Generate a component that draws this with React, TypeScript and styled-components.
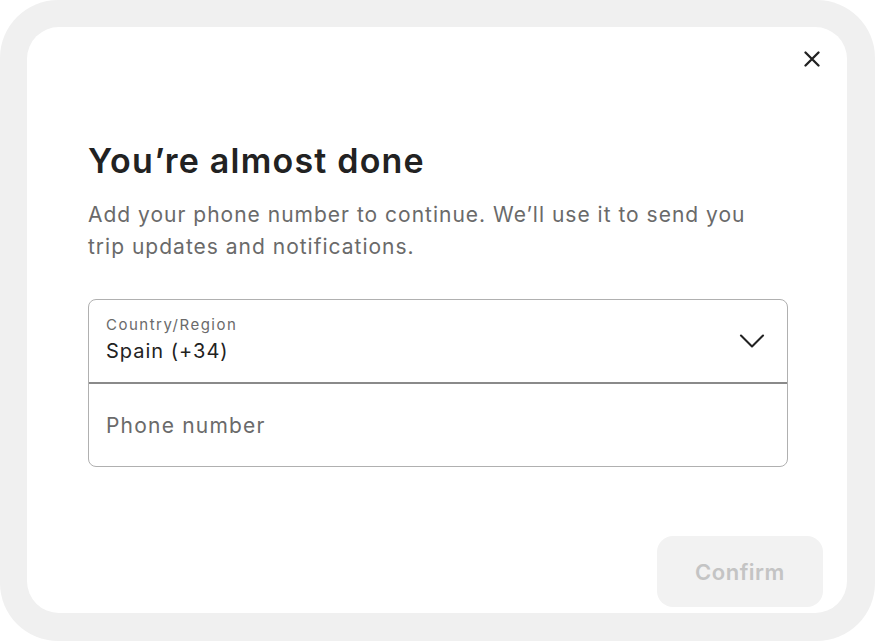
import styled, { createGlobalStyle } from "styled-components";

const GlobalStyle = createGlobalStyle`
  html, body {
    margin: 0;
    padding: 0;
    background: #ffffff;
  }
  body {
    font-family: Inter, "Noto Sans", "Liberation Sans", sans-serif;
    color: #222222;
  }
`;

const App = () => {
  return (
    <>
      <GlobalStyle />
      <Frame>
        <Card>
          <TopBar>
            <CloseButton aria-label="Close">
              <svg width="16" height="16" viewBox="0 0 16 16" fill="none">
                <path d="M1.5 1.5L14.5 14.5M14.5 1.5L1.5 14.5" stroke="#222" strokeWidth="2.3" strokeLinecap="round" />
              </svg>
            </CloseButton>
          </TopBar>

          <Content>
            <Title>You’re almost done</Title>
            <Subtitle>
              Add your phone number to continue. We’ll use it to send you trip updates and notifications.
            </Subtitle>

            <FieldGroup>
              <SelectCell>
                <SelectText>
                  <Label>Country/Region</Label>
                  <Value>Spain (+34)</Value>
                </SelectText>
                <svg width="26" height="16" viewBox="0 0 26 16" fill="none">
                  <path d="M2 2.5L13 13.5L24 2.5" stroke="#222" strokeWidth="2.1" strokeLinecap="round" strokeLinejoin="round" />
                </svg>
              </SelectCell>
              <InputCell>
                <PhoneInput placeholder="Phone number" />
              </InputCell>
            </FieldGroup>
          </Content>

          <Footer>
            <ConfirmButton disabled>Confirm</ConfirmButton>
          </Footer>
        </Card>
      </Frame>
    </>
  );
};

export default App;

const Frame = styled.div`
  box-sizing: border-box;
  width: 875px;
  height: 641px;
  padding: 27px 28px 28px 27px;
  background: #f0f0f0;
  border-radius: 58px;
  display: flex;
`;

const Card = styled.div`
  flex: 1;
  background: #ffffff;
  border-radius: 32px;
  display: flex;
  flex-direction: column;
`;

const TopBar = styled.div`
  display: flex;
  justify-content: flex-end;
  padding: 16px 19px 0 0;
`;

const CloseButton = styled.button`
  width: 32px;
  height: 32px;
  padding: 0;
  border: none;
  background: transparent;
  display: flex;
  align-items: center;
  justify-content: center;
  cursor: pointer;
`;

const Content = styled.div`
  padding: 66px 59px 0 61px;
  display: flex;
  flex-direction: column;
`;

const Title = styled.h1`
  margin: 0;
  font-size: 34px;
  line-height: 40px;
  font-weight: 600;
  letter-spacing: 1.2px;
  color: #222222;
`;

const Subtitle = styled.p`
  margin: 18px 0 0;
  font-size: 21px;
  line-height: 32px;
  font-weight: 400;
  letter-spacing: 1px;
  color: #6a6a6a;
`;

const FieldGroup = styled.div`
  margin-top: 36px;
  border: 1px solid #b0b0b0;
  border-radius: 8px;
  display: flex;
  flex-direction: column;
`;

const SelectCell = styled.div`
  height: 84px;
  box-sizing: border-box;
  padding: 16px 22px 0 17px;
  display: flex;
  justify-content: space-between;
  align-items: flex-start;
  border-bottom: 2px solid #8a8a8a;

  svg {
    margin-top: 17px;
  }
`;

const SelectText = styled.div`
  display: flex;
  flex-direction: column;
`;

const Label = styled.span`
  font-size: 15px;
  line-height: 18px;
  letter-spacing: 1.5px;
  color: #6a6a6a;
`;

const Value = styled.span`
  margin-top: 5px;
  font-size: 20px;
  line-height: 24px;
  letter-spacing: 1px;
  color: #222222;
`;

const InputCell = styled.div`
  height: 82px;
  display: flex;
  align-items: center;
  padding: 0 17px;
`;

const PhoneInput = styled.input`
  flex: 1;
  border: none;
  outline: none;
  padding: 0;
  font-family: inherit;
  font-size: 21px;
  letter-spacing: 1.2px;
  color: #222222;
  background: transparent;

  &::placeholder {
    color: #6a6a6a;
  }
`;

const Footer = styled.div`
  margin-top: auto;
  display: flex;
  justify-content: flex-end;
  padding: 0 24px 6px 0;
`;

const ConfirmButton = styled.button`
  width: 166px;
  height: 71px;
  border: none;
  border-radius: 16px;
  background: #f2f2f2;
  color: #c4c4c4;
  font-family: inherit;
  font-size: 22px;
  font-weight: 600;
  letter-spacing: 0.5px;
`;
